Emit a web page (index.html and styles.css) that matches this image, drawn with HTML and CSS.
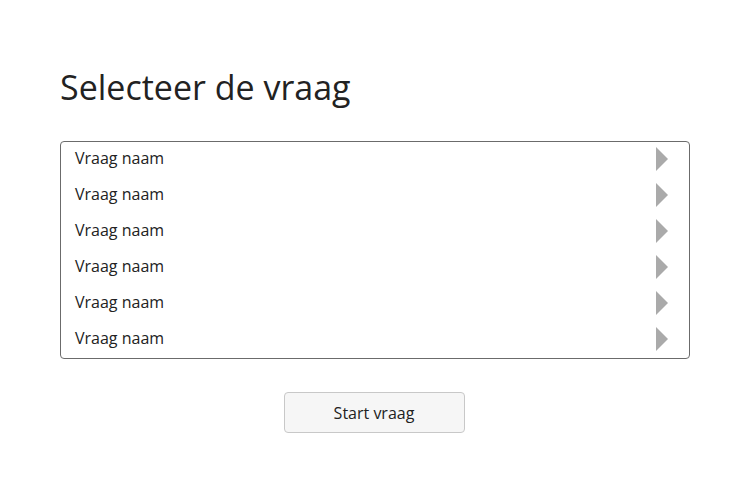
FILE: index.html
```html
<!DOCTYPE html>
<html lang="nl">
<head>
<meta charset="utf-8">
<title>Selecteer de vraag</title>
<link rel="stylesheet" href="styles.css">
</head>
<body>
<main class="page">
  <h1 class="title">Selecteer de vraag</h1>
  <ul class="list">
    <li class="item"><span>Vraag naam</span><span class="arrow"></span></li>
    <li class="item"><span>Vraag naam</span><span class="arrow"></span></li>
    <li class="item"><span>Vraag naam</span><span class="arrow"></span></li>
    <li class="item"><span>Vraag naam</span><span class="arrow"></span></li>
    <li class="item"><span>Vraag naam</span><span class="arrow"></span></li>
    <li class="item"><span>Vraag naam</span><span class="arrow"></span></li>
  </ul>
  <div class="actions">
    <button class="btn" type="button">Start vraag</button>
  </div>
</main>
</body>
</html>
```

FILE: styles.css
```css
html, body {
  margin: 0;
  padding: 0;
  background: #fff;
}
body {
  font-family: "Open Sans", "Liberation Sans", sans-serif;
  color: #333;
}
.page {
  width: 630px;
  margin: 0 0 0 60px;
  padding-top: 62px;
}
.title {
  margin: 0;
  font-size: 34px;
  font-weight: 400;
  line-height: 50px;
  color: #222;
}
.list {
  list-style: none;
  margin: 29px 0 0 0;
  padding: 0;
  border: 1px solid #6b6b6b;
  border-radius: 4px;
}
.item {
  display: flex;
  align-items: center;
  justify-content: space-between;
  height: 36px;
  padding: 0 21px 0 14px;
  font-size: 16px;
  color: #222;
}
.item span:first-child {
  margin-top: -4px;
}
.arrow {
  width: 0;
  height: 0;
  border-top: 12px solid transparent;
  border-bottom: 12px solid transparent;
  border-left: 12px solid #aaa;
  margin-top: -2px;
}
.actions {
  display: flex;
  justify-content: center;
  margin-top: 33px;
  padding-right: 2px;
}
.btn {
  width: 181px;
  height: 41px;
  background: #f6f6f6;
  border: 1px solid #c8c8c8;
  border-radius: 4px;
  font-family: inherit;
  font-size: 16px;
  color: #222;
  cursor: pointer;
}
```
